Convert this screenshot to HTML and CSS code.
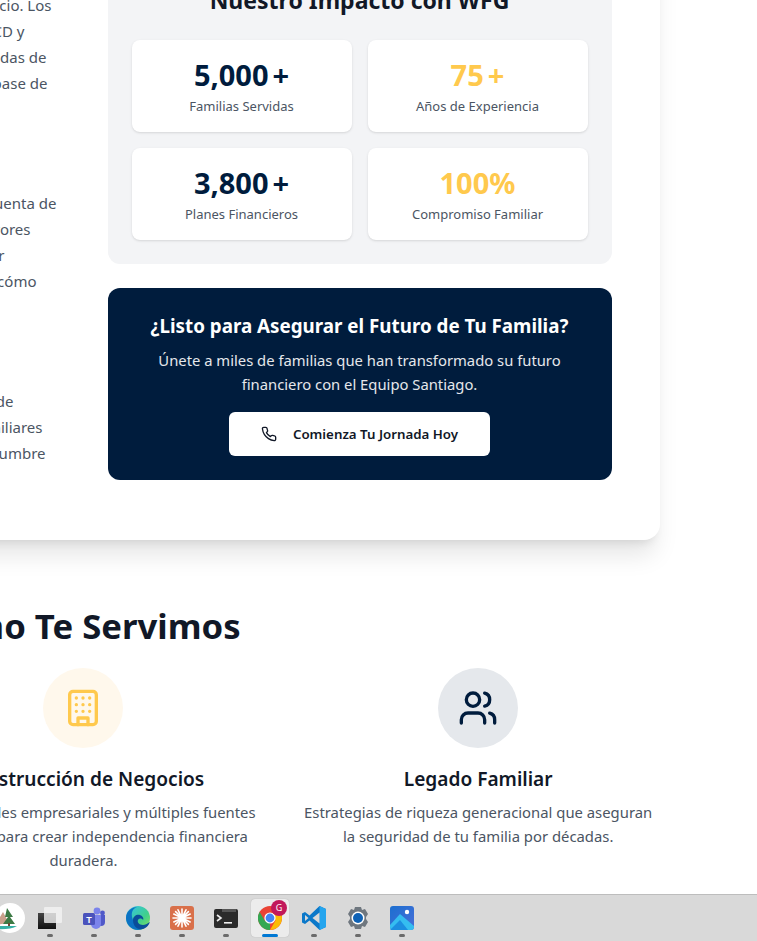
FILE: index.html
```html
<!DOCTYPE html>
<html lang="es">
<head>
<meta charset="utf-8">
<title>Equipo Santiago</title>
<link rel="stylesheet" href="styles.css">
</head>
<body>
<div class="screen">
  <div class="viewport">
    <main class="page">
      <section class="card">
        <div class="story">
          <p class="para">
            <span class="ln e52">el crecimiento de tu negocio. Los</span>
            <span class="ln e25">cuentas IRA, CD y</span>
            <span class="ln e47">estrategias probadas de</span>
            <span class="ln e48">construyen la base de</span>
          </p>
          <p class="para">
            <span class="ln e56">abrir una cuenta de</span>
            <span class="ln e31">tus mayores</span>
            <span class="ln e5">para lograr</span>
            <span class="ln e37">aprende cómo</span>
          </p>
          <p class="para">
            <span class="ln e14">planes de</span>
            <span class="ln e43">metas familiares</span>
            <span class="ln e46">la incertidumbre</span>
          </p>
        </div>
        <div class="side">
          <div class="impact">
            <h2 class="impact-title">Nuestro Impacto con WFG</h2>
            <div class="stats">
              <div class="stat"><div class="num">5,000<span class="plus">+</span></div><div class="lbl">Familias Servidas</div></div>
              <div class="stat"><div class="num gold">75<span class="plus">+</span></div><div class="lbl">Años de Experiencia</div></div>
              <div class="stat"><div class="num">3,800<span class="plus">+</span></div><div class="lbl">Planes Financieros</div></div>
              <div class="stat"><div class="num gold">100%</div><div class="lbl">Compromiso Familiar</div></div>
            </div>
          </div>
          <div class="cta">
            <h3 class="cta-title">¿Listo para Asegurar el Futuro de Tu Familia?</h3>
            <p class="cta-text">Únete a miles de familias que han transformado su futuro financiero con el Equipo Santiago.</p>
            <a class="cta-btn">
              <svg class="phone" viewBox="0 0 24 24"><path d="M22 16.92v3a2 2 0 0 1-2.18 2 19.79 19.79 0 0 1-8.63-3.07 19.5 19.5 0 0 1-6-6 19.79 19.79 0 0 1-3.07-8.67A2 2 0 0 1 4.11 2h3a2 2 0 0 1 2 1.72 12.84 12.84 0 0 0 .7 2.81 2 2 0 0 1-.45 2.11L8.09 9.91a16 16 0 0 0 6 6l1.27-1.27a2 2 0 0 1 2.11-.45 12.84 12.84 0 0 0 2.81.7A2 2 0 0 1 22 16.92z"/></svg>
              <span>Comienza Tu Jornada Hoy</span>
            </a>
          </div>
        </div>
      </section>
      <section class="serve">
        <h2 class="serve-title">Cómo Te Servimos</h2>
        <div class="serve-grid">
          <div class="item">
            <div class="circle c-gray"></div>
            <h3 class="item-title">Protección Financiera</h3>
            <p class="item-text">Soluciones de protección que cuidan lo que más importa.</p>
          </div>
          <div class="item">
            <div class="circle c-gold">
              <svg class="ico gold-s" viewBox="0 0 24 24"><rect x="4" y="2" width="16" height="20" rx="2"/><path d="M9 22v-4h6v4M8 6h.01M16 6h.01M12 6h.01M12 10h.01M12 14h.01M16 10h.01M16 14h.01M8 10h.01M8 14h.01"/></svg>
            </div>
            <h3 class="item-title">Construcción de Negocios</h3>
            <p class="item-text">Oportunidades empresariales y múltiples fuentes de ingreso para crear independencia financiera duradera.</p>
          </div>
          <div class="item">
            <div class="circle c-gray">
              <svg class="ico navy-s" viewBox="0 0 24 24"><path d="M16 21v-2a4 4 0 0 0-4-4H6a4 4 0 0 0-4 4v2"/><circle cx="9" cy="7" r="4"/><path d="M22 21v-2a4 4 0 0 0-3-3.87M16 3.13a4 4 0 0 1 0 7.75"/></svg>
            </div>
            <h3 class="item-title">Legado Familiar</h3>
            <p class="item-text">Estrategias de riqueza generacional que aseguran la seguridad de tu familia por décadas.</p>
          </div>
        </div>
      </section>
    </main>
  </div>
  <footer class="taskbar">
    <div class="pill">
      <svg viewBox="0 0 30 30" class="pill-art">
        <path d="M0 22 L8 9 L14 20 Z" fill="#c9a08c"/>
        <path d="M12 5 L18 14 L15 14 L20 21 L8 21 L13 14 L10 14 Z" fill="#3d7a45"/>
        <rect x="13" y="20" width="2" height="4" fill="#6b4a33"/>
        <path d="M0 23 H22 Q15 27 0 26 Z" fill="#35b0a5"/>
      </svg>
    </div>
    <div class="tile">
      <svg class="app" viewBox="0 0 24 24"><defs><linearGradient id="tv" x1="0" y1="0" x2="0" y2="1"><stop offset="0" stop-color="#444"/><stop offset="1" stop-color="#111"/></linearGradient></defs><rect x="0" y="7" width="18" height="16" fill="url(#tv)"/><rect x="6" y="1" width="18" height="16" rx="1" fill="#f2f2f2" fill-opacity=".8"/></svg>
    </div>
    <div class="tile">
      <svg class="app" viewBox="0 0 24 24"><circle cx="15" cy="5" r="3.4" fill="#7b83eb"/><circle cx="20.5" cy="7" r="2.4" fill="#5059c9"/><path d="M14 9h9v7a4 4 0 0 1-4 4h-1z" fill="#5059c9"/><path d="M9 9h10v9a5 5 0 0 1-10 0z" fill="#7b83eb"/><rect x="1" y="7" width="12" height="12" rx="1.5" fill="#4b53bc"/><text x="7" y="16.5" class="teams-t">T</text></svg>
    </div>
    <div class="tile">
      <svg class="app" viewBox="0 0 24 24"><defs><linearGradient id="eg" x1="0" y1="0" x2="1" y2="1"><stop offset="0" stop-color="#35c1f1"/><stop offset=".6" stop-color="#3fd08c"/><stop offset="1" stop-color="#8be05a"/></linearGradient></defs><circle cx="12" cy="12" r="12" fill="url(#eg)"/><path d="M0 12C0 5 6 1 11 1c-6 2-6 8-4 13s8 8 13 6c-3 3-6 4-8 4C5 24 0 18 0 12z" fill="#0c72c4"/><path d="M7 14c0-4 4-6 7-5s4 4 3 5c-1-2-4-2-5 0s1 5 5 5c2 0 4-1 7-3-2 5-6 8-11 7-4-1-6-5-6-9z" fill="#0a4d9a"/></svg>
    </div>
    <div class="tile">
      <svg class="app" viewBox="0 0 24 24"><rect width="24" height="24" rx="3" fill="#d9704a"/><path d="M12 3v18M3 12h18M5.6 5.6l12.8 12.8M18.4 5.6L5.6 18.4M8 3.8l8 16.4M16 3.8L8 20.2M3.8 8l16.4 8M20.2 8L3.8 16" stroke="#fff" stroke-width="1.6" stroke-linecap="round"/><circle cx="12" cy="12" r="3" fill="#fff"/></svg>
    </div>
    <div class="tile">
      <svg class="app" viewBox="0 0 24 24"><path d="M0 5a2 2 0 0 1 2-2h20a2 2 0 0 1 2 2v15a2 2 0 0 1-2 2H2a2 2 0 0 1-2-2z" fill="#2b2b2b"/><rect x="8" y="3" width="14" height="3" fill="#555"/><path d="M3 9l4 3-4 3" fill="none" stroke="#eee" stroke-width="1.6"/><rect x="10" y="16" width="8" height="1.6" fill="#eee"/></svg>
    </div>
    <div class="tile tile-on">
      <svg class="app" viewBox="0 0 24 24"><circle cx="12" cy="12" r="12" fill="#ea4335"/><path d="M12 24A12 12 0 0 1 1.6 6L7 15l5 2z" fill="#34a853"/><path d="M12 24l5.5-9.5L12 7h10.9A12 12 0 0 1 12 24z" fill="#fbbc05"/><circle cx="12" cy="12" r="5.6" fill="#fff"/><circle cx="12" cy="12" r="4.4" fill="#4285f4"/></svg>
      <span class="badge">G</span>
      <span class="bar"></span>
    </div>
    <div class="tile">
      <svg class="app" viewBox="0 0 24 24"><path d="M17.5 0L24 3v18l-6.5 3L7.5 14.500 3 18 0 16.500V7.500L3 6l4.500 3.500z" fill="#0b78c9"/><path d="M17.500 0L24 3v18l-6.500 3z" fill="#25a5ee"/><path d="M17.500 6.500v11L10.500 12z" fill="#d9d9d9"/><path d="M3 9l3.500 3L3 15z" fill="#d9d9d9"/></svg>
    </div>
    <div class="tile">
      <svg class="app" viewBox="0 0 24 24"><path d="M9 1h6l1 3 3-1 3 5-2 3v2l2 3-3 5-3-1-1 3H9l-1-3-3 1-3-5 2-3v-2L2 8l3-5 3 1z" fill="#6f777f"/><circle cx="12" cy="12" r="6.500" fill="#fff"/><circle cx="12" cy="12" r="5" fill="#0f62b5"/></svg>
    </div>
    <div class="tile">
      <svg class="app" viewBox="0 0 24 24"><defs><linearGradient id="pg" x1="0" y1="0" x2="1" y2="1"><stop offset="0" stop-color="#1b6fd0"/><stop offset="1" stop-color="#4a6fd8"/></linearGradient></defs><rect width="24" height="24" rx="3" fill="url(#pg)"/><circle cx="17" cy="6" r="2.200" fill="#fff"/><path d="M0 19L10 8l14 12v1a3 3 0 0 1-3 3H3a3 3 0 0 1-3-3z" fill="#35bdf0"/><path d="M0 24l10-10 8 10z" fill="#1c8ee0"/></svg>
    </div>
  </footer>
</div>
</body>
</html>
```
FILE: styles.css
```css
* { box-sizing: border-box; }
html, body { margin: 0; padding: 0; height: 100%; overflow: hidden; background: #fff; }
body { font-family: "Noto Sans", sans-serif; color: #111827; }
h2, h3, p { margin: 0; }

.screen { display: flex; flex-direction: column; height: 941px; }
.viewport { flex: 1; min-height: 0; overflow: hidden; }
.page { width: 1152px; margin-top: -88px; margin-left: -492.500px; }

.card {
  display: grid;
  grid-template-columns: 504px 504px;
  gap: 48px;
  padding: 48px 48px 60px;
  background: #fff;
  border-radius: 16px;
  box-shadow: 0 20px 25px -5px rgba(0,0,0,.1), 0 8px 10px -6px rgba(0,0,0,.1);
}

.story { display: flex; flex-direction: column; gap: 94px; padding-top: 32px; }
.para { display: flex; flex-direction: column; font-size: 15px; line-height: 26px; color: #4b5563; }
.ln { display: block; text-align: right; white-space: nowrap; }
.e52 { padding-right: 8px; }
.e25 { padding-right: 35px; }
.e47 { padding-right: 13px; }
.e48 { padding-right: 12px; }
.e56 { padding-right: 3px; }
.e31 { padding-right: 29px; }
.e5 { padding-right: 55px; }
.e37 { padding-right: 23px; }
.e14 { padding-right: 46px; }
.e43 { padding-right: 17px; }
.e46 { padding-right: 14px; }

.side { display: flex; flex-direction: column; gap: 24px; }
.impact { background: #f3f4f6; border-radius: 12px; padding: 24px; }
.impact-title { font-size: 23px; line-height: 32px; font-weight: 700; text-align: center; margin-bottom: 24px; }
.stats { display: grid; grid-template-columns: 1fr 1fr; gap: 16px; }
.stat { background: #fff; border-radius: 8px; padding: 17px 16px 16px; text-align: center; box-shadow: 0 1px 3px rgba(0,0,0,.1), 0 1px 2px -1px rgba(0,0,0,.1); }
.num { font-size: 29px; line-height: 36px; font-weight: 700; color: #001c3d; }
.plus { margin-left: 4px; }
.gold { color: #ffc94d; }
.lbl { font-size: 13px; line-height: 20px; margin-top: 3px; color: #4b5563; }

.cta { background: #001c3d; border-radius: 12px; padding: 24px; text-align: center; color: #fff; }
.cta-title { font-size: 18.800px; line-height: 28px; font-weight: 700; margin-bottom: 8px; }
.cta-text { font-size: 14.800px; line-height: 24px; color: #e5e7eb; padding: 0 16px; margin-bottom: 16px; }
.cta-btn { display: inline-flex; align-items: center; gap: 16px; height: 44px; padding: 0 32px; background: #fff; border-radius: 6px; color: #111827; font-size: 13.300px; font-weight: 600; }
.phone { width: 16px; height: 16px; fill: none; stroke: #111827; stroke-width: 2; stroke-linecap: round; stroke-linejoin: round; }

.serve { margin-top: 66px; text-align: center; }
.serve-title { font-size: 34.700px; line-height: 40px; font-weight: 700; margin-bottom: 22px; }
.serve-grid { display: grid; grid-template-columns: repeat(3, 1fr); gap: 32px; }
.item { display: flex; flex-direction: column; align-items: center; }
.circle { width: 80px; height: 80px; border-radius: 50%; display: flex; align-items: center; justify-content: center; margin-bottom: 17px; }
.c-gold { background: #fff8ec; }
.c-gray { background: #e5e8ec; }
.ico { width: 40px; height: 40px; fill: none; stroke-width: 2; stroke-linecap: round; stroke-linejoin: round; }
.gold-s { stroke: #ffc94d; }
.navy-s { stroke: #001c3d; }
.item-title { font-size: 19.100px; line-height: 28px; font-weight: 600; color: #111827; margin-bottom: 7px; }
.item-text { font-size: 14.850px; line-height: 24px; color: #4b5563; }

.taskbar { flex: none; height: 47px; background: #d9d9d9; border-top: 1px solid #bdbdbd; display: flex; align-items: center; }
.pill { flex: none; width: 30px; height: 30px; margin: 0 3px 0 -5px; border-radius: 15px; background: #fff; overflow: hidden; }
.pill-art { width: 30px; height: 30px; display: block; }
.tile { flex: none; width: 44px; height: 46px; display: flex; align-items: center; justify-content: center; position: relative; }
.tile::after { content: ""; position: absolute; left: 19px; bottom: 4px; width: 6px; height: 3px; border-radius: 2px; background: #6b6b6b; }
.tile-on::after { display: none; }
.tile-on::before { content: ""; position: absolute; left: 3px; top: 4px; width: 38px; height: 38px; border-radius: 4px; background: #ececec; box-shadow: 0 0 1px rgba(0,0,0,.25); }
.app { width: 24px; height: 24px; display: block; position: relative; }
.teams-t { font-family: "Liberation Sans", sans-serif; font-size: 9px; font-weight: 700; fill: #fff; text-anchor: middle; }
.badge { position: absolute; left: 23px; top: 5px; width: 16px; height: 16px; border-radius: 50%; background: #c2185b; color: #fff; font-size: 9px; line-height: 16px; text-align: center; }
.bar { position: absolute; left: 14px; bottom: 4px; width: 16px; height: 3px; border-radius: 2px; background: #0078d4; }
```
